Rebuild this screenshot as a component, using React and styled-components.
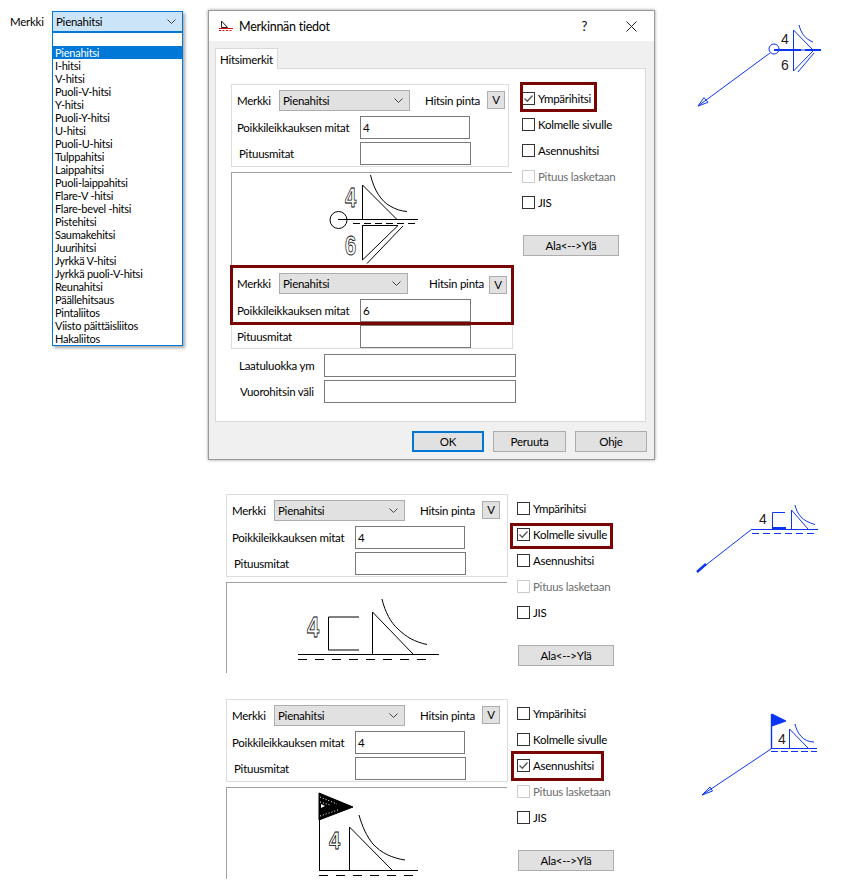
import React from "react";
import styled, { createGlobalStyle } from "styled-components";

const WELD_TYPES = [
  "Pienahitsi", "I-hitsi", "V-hitsi", "Puoli-V-hitsi", "Y-hitsi", "Puoli-Y-hitsi", "U-hitsi",
  "Puoli-U-hitsi", "Tulppahitsi", "Laippahitsi", "Puoli-laippahitsi", "Flare-V -hitsi",
  "Flare-bevel -hitsi", "Pistehitsi", "Saumakehitsi", "Juurihitsi", "Jyrkkä V-hitsi",
  "Jyrkkä puoli-V-hitsi", "Reunahitsi", "Päällehitsaus", "Pintaliitos", "Viisto päittäisliitos",
  "Hakaliitos",
];

const BLUE = "#0a35f5";

const GlobalStyle = createGlobalStyle`
  html, body {
    margin: 0;
    background: #fff;
  }
  body {
    font-family: Lato, "Liberation Sans", sans-serif;
    font-size: 11.5px;
    letter-spacing: -0.25px;
    color: #000;
  }
`;

const Page = styled.div`
  width: 850px;
  height: 886px;
  box-sizing: border-box;
  padding-top: 10px;
  display: grid;
  grid-template-columns: 208px 487px 155px;
  grid-template-rows: 484px 205px 177px;
  overflow: hidden;
`;

const DropdownColumn = styled.div`
  display: flex;
  padding: 1px 0 0 10px;
  align-items: flex-start;
`;

const DropdownLabel = styled.div`
  width: 42px;
  line-height: 21px;
`;

const Dropdown = styled.div`
  width: 131px;
  box-shadow: 2px 2px 3px rgba(0, 0, 0, 0.35);
`;

const Select = styled.div`
  width: ${(p) => p.$w}px;
  height: 21px;
  box-sizing: border-box;
  display: flex;
  align-items: center;
  justify-content: space-between;
  padding: 0 6px 0 3px;
  border: 1px solid ${(p) => (p.$open ? "#0078d7" : "#adadad")};
  background: ${(p) => (p.$open ? "#cce4f7" : "#e1e1e1")};
`;

const Chevron = styled.svg`
  width: 9px;
  height: 5px;
  fill: none;
  stroke: #444;
  stroke-width: 1;
`;

const List = styled.div`
  border: 1px solid #0078d7;
  background: #fff;
  padding-top: 13px;
  font-size: 11px;
`;

const ListItem = styled.div`
  height: 13px;
  line-height: 13px;
  padding-left: 2px;
  background: ${(p) => (p.$active ? "#0078d7" : "transparent")};
  color: ${(p) => (p.$active ? "#fff" : "#000")};
`;

const Dialog = styled.div`
  width: 447px;
  height: 450px;
  box-sizing: border-box;
  border: 1px solid #9a9a9a;
  box-shadow: 0 0 3px rgba(0, 0, 0, 0.4);
  background: #f0f0f0;
  display: flex;
  flex-direction: column;
`;

const TitleBar = styled.div`
  height: 30px;
  flex: none;
  background: #fff;
  display: flex;
  align-items: center;
  padding: 0 17px 0 9px;
  font-size: 12.5px;
`;

const TitleText = styled.span`
  margin-left: 5px;
  flex: 1;
`;

const HelpMark = styled.span`
  margin-right: 39px;
  font-size: 13px;
`;

const DialogBody = styled.div`
  flex: 1;
  padding: 7px 0 0 6px;
`;

const Tab = styled.div`
  width: 63px;
  height: 21px;
  box-sizing: border-box;
  border: 1px solid #d9d9d9;
  border-bottom: none;
  background: #fff;
  text-align: center;
  line-height: 21px;
  position: relative;
  z-index: 1;
`;

const TabPanel = styled.div`
  width: 431px;
  height: 354px;
  box-sizing: border-box;
  margin-top: -1px;
  border: 1px solid #d9d9d9;
  background: #fff;
  padding: 15px 0 0 15px;
`;

const Footer = styled.div`
  display: flex;
  justify-content: flex-end;
  gap: 9px;
  padding: 9px 7px 0 0;
`;

const DialogButton = styled.div`
  width: ${(p) => p.$w}px;
  height: 21px;
  box-sizing: border-box;
  border: ${(p) => (p.$primary ? "2px solid #0078d7" : "1px solid #adadad")};
  background: #e1e1e1;
  display: flex;
  align-items: center;
  justify-content: center;
`;

const Sheet = styled.div`
  display: flex;
  align-items: flex-start;
  padding-left: ${(p) => p.$indent || 0}px;
`;

const FormColumn = styled.div`
  width: 291px;
  flex: none;
`;

const Group = styled.div`
  position: relative;
  width: ${(p) => p.$w}px;
  height: ${(p) => (p.$lower ? 84 : 83)}px;
  box-sizing: border-box;
  border: 1px solid #dcdcdc;
  padding: ${(p) => (p.$lower ? 7 : 5)}px 0 0 5px;
`;

const Row = styled.div`
  display: flex;
  align-items: ${(p) => (p.$top ? "flex-start" : "center")};
  margin-top: ${(p) => p.$mt || 0}px;
  padding-left: ${(p) => p.$indent || 0}px;
`;

const Label = styled.div`
  width: ${(p) => p.$w}px;
  box-sizing: border-box;
  padding-left: ${(p) => p.$pad || 0}px;
  flex: none;
  white-space: nowrap;
`;

const SelectLabel = styled(Label)`
  line-height: 21px;
`;

const SurfaceLabel = styled(Label)`
  margin-left: ${(p) => p.$ml}px;
  line-height: 21px;
`;

const SurfaceButton = styled.div`
  width: 18px;
  height: 18px;
  box-sizing: border-box;
  margin-top: ${(p) => p.$mt}px;
  border: 1px solid #adadad;
  background: #e1e1e1;
  text-align: center;
  line-height: 16px;
`;

const TextBox = styled.div`
  width: ${(p) => p.$w}px;
  height: 23px;
  box-sizing: border-box;
  flex: none;
  border: 1px solid #7a7a7a;
  background: #fff;
  padding-left: 2px;
  line-height: 21px;
`;

const RedFrame = styled.div`
  position: absolute;
  left: ${(p) => p.$l}px;
  top: ${(p) => p.$t}px;
  width: ${(p) => p.$w}px;
  height: ${(p) => p.$h}px;
  box-sizing: border-box;
  border: 3px solid #7a0505;
  pointer-events: none;
`;

const Sketch = styled.svg`
  display: block;
  border-top: 1px solid #a0a0a0;
  border-left: 1px solid #a0a0a0;
  margin-top: 5px;
  fill: none;
  stroke: #000;
  stroke-width: 1;
  opacity: 0.999;
`;

const OutlineDigit = styled.text`
  font-family: "Liberation Sans", sans-serif;
  font-weight: bold;
  font-size: ${(p) => p.$size}px;
  fill: #fff;
  stroke: #000;
  stroke-width: 0.8;
`;

const Options = styled.div`
  padding-top: 8px;
  display: flex;
  flex-direction: column;
  gap: 13px;
`;

const CheckRow = styled.div`
  position: relative;
  display: flex;
  align-items: center;
  height: 13px;
  color: ${(p) => (p.$disabled ? "#6d6d6d" : "#000")};
`;

const CheckBox = styled.div`
  width: 13px;
  height: 13px;
  box-sizing: border-box;
  flex: none;
  margin-right: 3px;
  border: 1px solid ${(p) => (p.$disabled ? "#cccccc" : "#333")};
  background: #fff;
  display: flex;
  align-items: center;
  justify-content: center;
`;

const Tick = styled.svg`
  width: 11px;
  height: 11px;
  fill: none;
  stroke: #555;
  stroke-width: 1.3;
`;

const SwapButton = styled.div`
  width: 96px;
  height: 21px;
  box-sizing: border-box;
  margin: 13px 0 0 1px;
  border: 1px solid #adadad;
  background: #e1e1e1;
  display: flex;
  align-items: center;
  justify-content: center;
`;

const Leader = styled.svg`
  display: block;
  margin-top: ${(p) => p.$mt}px;
  fill: none;
  stroke: ${BLUE};
  stroke-width: 1;
`;

const LeaderDigit = styled.text`
  font-family: "Liberation Sans", sans-serif;
  font-size: 14px;
  fill: #2a1a1a;
  stroke: none;
`;

const SelectField = ({ w, open }) => (
  <Select $w={w} $open={open}>
    <span>Pienahitsi</span>
    <Chevron viewBox="0 0 9 5">
      <polyline points="0.5,0.5 4.5,4.5 8.5,0.5" />
    </Chevron>
  </Select>
);

const WeldFields = ({ value, w, lower, children }) => (
  <Group $w={w} $lower={lower}>
    <Row $top>
      <SelectLabel $w={42}>Merkki</SelectLabel>
      <SelectField w={lower ? 129 : 131} />
      <SurfaceLabel $w={lower ? 60 : 62} $ml={lower ? 21 : 15}>Hitsin pinta</SurfaceLabel>
      <SurfaceButton $mt={lower ? 3 : 1}>V</SurfaceButton>
    </Row>
    <Row $mt={5}>
      <Label $w={123}>Poikkileikkauksen mitat</Label>
      <TextBox $w={lower ? 111 : 110}>{value}</TextBox>
    </Row>
    <Row $mt={3}>
      <Label $w={123} $pad={lower ? 0 : 2}>Pituusmitat</Label>
      <TextBox $w={111} />
    </Row>
    {children}
  </Group>
);

const WeldOptions = ({ checked, frame }) => {
  const items = ["Ympärihitsi", "Kolmelle sivulle", "Asennushitsi", "Pituus lasketaan", "JIS"];
  return (
    <Options>
      {items.map((item) => (
        <CheckRow key={item} $disabled={item === "Pituus lasketaan"}>
          <CheckBox $disabled={item === "Pituus lasketaan"}>
            {item === checked && (
              <Tick viewBox="0 0 11 11">
                <polyline points="1.5,5.5 4.3,8.3 9.5,2.5" />
              </Tick>
            )}
          </CheckBox>
          {item}
          {item === checked && <RedFrame $l={frame.l} $t={frame.t} $w={frame.w} $h={frame.h} />}
        </CheckRow>
      ))}
      <SwapButton>Ala&lt;--&gt;Ylä</SwapButton>
    </Options>
  );
};

const DialogIcon = () => (
  <svg width="16" height="12" viewBox="0 0 16 12" fill="none">
    <path d="M3.5 1V7.5M3.5 1L9.5 7.5H3.5" stroke="#222" />
    <path d="M1 8.5H15" stroke="#e01010" />
    <path d="M1 10.5H15" stroke="#e01010" strokeDasharray="2 1.5" />
  </svg>
);

const CloseIcon = () => (
  <svg width="11" height="11" viewBox="0 0 11 11" fill="none" stroke="#222">
    <path d="M0.5 0.5L10.5 10.5M10.5 0.5L0.5 10.5" />
  </svg>
);

const FilletSketch = () => (
  <Sketch viewBox="232 173 280 92" width="280" height="92">
    <OutlineDigit x="345" y="207" $size={27} textLength="11" lengthAdjust="spacingAndGlyphs">4</OutlineDigit>
    <OutlineDigit x="345" y="255" $size={27} textLength="11" lengthAdjust="spacingAndGlyphs">6</OutlineDigit>
    <circle cx="338.5" cy="220" r="8.5" />
    <path d="M338 219.5H418" />
    <path d="M353 223.5H418" strokeDasharray="7 4" />
    <path d="M362.5 185V219.5M362.5 185L397 219.5" />
    <path d="M370.5 175C374 190 381 201 390 206C396 209.5 401 211 407 211.5" />
    <path d="M362.5 225V260M362.5 225.5H398L362.5 260" />
    <path d="M403 226L367 263.5" />
  </Sketch>
);

const ThreeSidedSketch = () => (
  <Sketch viewBox="227 583 280 90" width="280" height="90">
    <OutlineDigit x="307" y="637" $size={29} textLength="12" lengthAdjust="spacingAndGlyphs">4</OutlineDigit>
    <path d="M359 617H328.5V650H359" />
    <path d="M298 654.5H439" />
    <path d="M298 659.5H431" strokeDasharray="9 8" />
    <path d="M372.5 612V654.5M372.5 612L413 654" />
    <path d="M382 599C385 612 391 623 398 629C406 637 415 642 427 644.5" />
  </Sketch>
);

const FieldWeldSketch = () => (
  <Sketch viewBox="227 788 280 91" width="280" height="91">
    <path d="M319.5 793V870.5" />
    <polygon points="319,793 353,807 319,820" fill="#000" />
    <path d="M320 797L337 804M320 816L338 810M320 802L330 805" stroke="#fff" strokeDasharray="1 2" />
    <polygon points="321,804 325,806 321,808" fill="#fff" stroke="none" />
    <OutlineDigit x="329" y="849" $size={24} textLength="11" lengthAdjust="spacingAndGlyphs">4</OutlineDigit>
    <path d="M319 870.5H418" />
    <path d="M319 875.5H418" strokeDasharray="9 8" />
    <path d="M349.5 827V870.5M349.5 827L392 870" />
    <path d="M359 815C362 826 367 837 373 844C381 853 392 858 405 860" />
  </Sketch>
);

const FilletLeader = () => (
  <Leader viewBox="695 15 155 100" width="155" height="100" $mt={5}>
    <circle cx="774" cy="49" r="5" />
    <path d="M770 53L698 106" />
    <polygon points="698,106 704,97.6 708,102.4" />
    <path d="M774 50H821" strokeWidth="2" />
    <path d="M801 50H805" stroke="#fff" />
    <path d="M793.5 30V71M793.5 30L813 50M793.5 71L813 51M798 72L814 53" />
    <path d="M799 25C801 33 805 39 813 42" />
    <LeaderDigit x="781" y="44">4</LeaderDigit>
    <LeaderDigit x="781" y="70">6</LeaderDigit>
  </Leader>
);

const ThreeSidedLeader = () => (
  <Leader viewBox="695 500 155 90" width="155" height="90" $mt={6}>
    <path d="M752 529L697 572" />
    <path d="M697 572L706 564" strokeWidth="2.5" />
    <path d="M752 529.5H818" />
    <path d="M752 533.5H814" strokeDasharray="7 4" />
    <path d="M785 512.5H772.5V528" />
    <path d="M772 528H786" strokeWidth="2" />
    <path d="M791.5 510V529M791.5 510L808 529" />
    <path d="M795 505C797 514 802 521 815 524.5" />
    <LeaderDigit x="759" y="524">4</LeaderDigit>
  </Leader>
);

const FieldWeldLeader = () => (
  <Leader viewBox="695 705 155 95" width="155" height="95" $mt={6}>
    <path d="M771 749L702 795" />
    <polygon points="702,795 710,787 712.5,791" />
    <path d="M771.5 714V749" strokeWidth="1.4" />
    <polygon points="772,714 786,721 772,726" fill={BLUE} />
    <path d="M771 748.5H817" />
    <path d="M771 751.5H817" strokeDasharray="7 3" />
    <path d="M789.5 729V748M789.5 729L808 748" />
    <path d="M795 724C797 733 803 742 814 742" />
    <LeaderDigit x="778" y="744">4</LeaderDigit>
  </Leader>
);

const App = () => (
  <Page>
    <GlobalStyle />

    <DropdownColumn>
      <DropdownLabel>Merkki</DropdownLabel>
      <Dropdown>
        <SelectField w={131} open />
        <List>
          {WELD_TYPES.map((name, i) => (
            <ListItem key={name} $active={i === 0}>{name}</ListItem>
          ))}
        </List>
      </Dropdown>
    </DropdownColumn>

    <Dialog>
      <TitleBar>
        <DialogIcon />
        <TitleText>Merkinnän tiedot</TitleText>
        <HelpMark>?</HelpMark>
        <CloseIcon />
      </TitleBar>
      <DialogBody>
        <Tab>Hitsimerkit</Tab>
        <TabPanel>
          <Sheet>
            <FormColumn>
              <WeldFields value="4" w={278} />
              <FilletSketch />
              <WeldFields value="6" w={282} lower>
                <RedFrame $l={-2} $t={-1} $w={284} $h={60} />
              </WeldFields>
              <Row $mt={5} $indent={8}>
                <Label $w={85}>Laatuluokka ym</Label>
                <TextBox $w={192} />
              </Row>
              <Row $mt={3} $indent={9}>
                <Label $w={84}>Vuorohitsin väli</Label>
                <TextBox $w={192} />
              </Row>
            </FormColumn>
            <WeldOptions checked="Ympärihitsi" frame={{ l: -2, t: -10, w: 77, h: 30 }} />
          </Sheet>
        </TabPanel>
        <Footer>
          <DialogButton $w={72} $primary>OK</DialogButton>
          <DialogButton $w={73}>Peruuta</DialogButton>
          <DialogButton $w={72}>Ohje</DialogButton>
        </Footer>
      </DialogBody>
    </Dialog>

    <FilletLeader />

    <div />
    <Sheet $indent={18}>
      <FormColumn>
        <WeldFields value="4" w={282} />
        <ThreeSidedSketch />
      </FormColumn>
      <WeldOptions checked="Kolmelle sivulle" frame={{ l: -7, t: -5, w: 103, h: 26 }} />
    </Sheet>
    <ThreeSidedLeader />

    <div />
    <Sheet $indent={18}>
      <FormColumn>
        <WeldFields value="4" w={282} />
        <FieldWeldSketch />
      </FormColumn>
      <WeldOptions checked="Asennushitsi" frame={{ l: -6, t: -8, w: 93, h: 30 }} />
    </Sheet>
    <FieldWeldLeader />
  </Page>
);

export default App;
